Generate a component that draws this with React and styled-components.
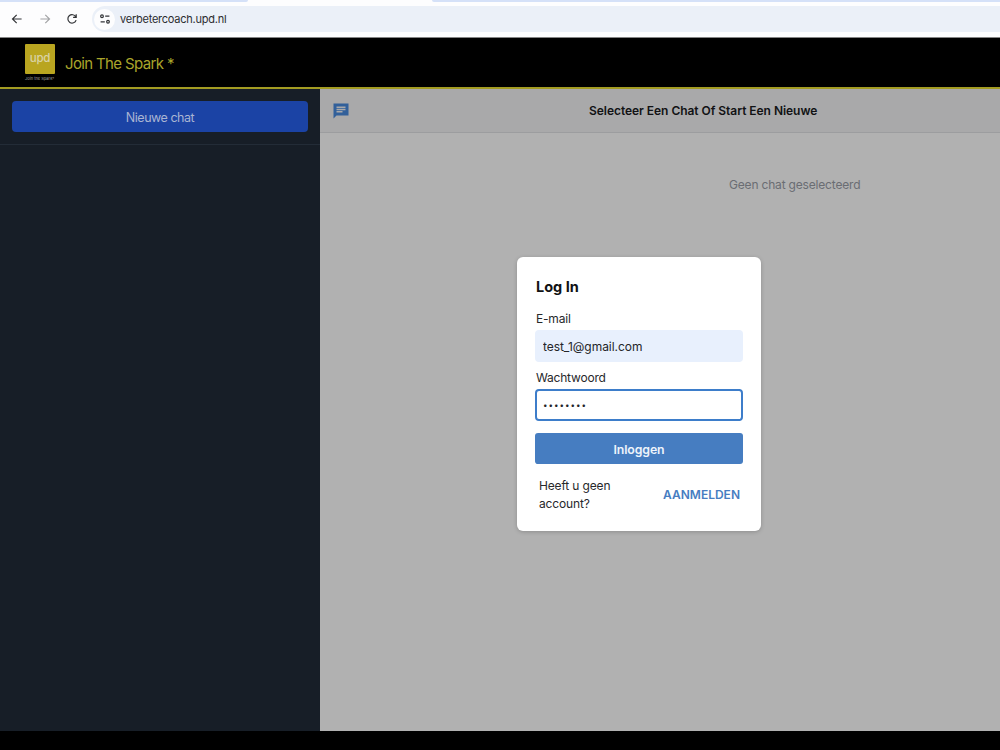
import React from 'react';
import styled, { createGlobalStyle } from 'styled-components';

const App = () => {
    return (
        <Window>
            <GlobalStyle />
            {/* Browser */}
            <TabStrip>
                <TabEdge width={248} side="left" />
                <TabEdge width={568} side="right" />
            </TabStrip>
            <Toolbar>
                <NavIcons>
                    <Icon viewBox="0 0 12 12"><path d="M10.6 6H1.6M5.7 1.8L1.5 6l4.2 4.2" /></Icon>
                    <Icon viewBox="0 0 12 12" faded><path d="M1.4 6h9M6.3 1.8L10.5 6l-4.2 4.2" /></Icon>
                    <Icon viewBox="0 0 12 12"><path d="M9.8 3.9A4.2 4.2 0 1 0 10.1 7.1M10.2 1.2v3.1H7.1" /></Icon>
                </NavIcons>
                <AddressBar>
                    <SiteInfo>
                        <Icon viewBox="0 0 12 12">
                            <circle cx="3" cy="3.2" r="1.35" />
                            <path d="M6.2 3.2h4.2M1.6 8.8h4.2" />
                            <circle cx="9" cy="8.8" r="1.35" />
                        </Icon>
                    </SiteInfo>
                    <Url>verbetercoach.upd.nl</Url>
                </AddressBar>
            </Toolbar>

            {/* Header */}
            <Header>
                <Logo>
                    <LogoBox>upd</LogoBox>
                    <LogoCaption>Join the Spark*</LogoCaption>
                </Logo>
                <Brand>Join The Spark *</Brand>
            </Header>

            <Content>
                <Sidebar>
                    <SidebarTop>
                        <NewChatButton>Nieuwe chat</NewChatButton>
                    </SidebarTop>
                </Sidebar>
                <Main>
                    <ChatHeader>
                        <ChatIcon viewBox="0 0 24 24">
                            <path d="M22 2H2v20l4-4h16V2zM6 9h12v2H6V9zm8 5H6v-2h8v2zm4-6H6V6h12v2z" />
                        </ChatIcon>
                        <ChatTitle>Selecteer Een Chat Of Start Een Nieuwe</ChatTitle>
                    </ChatHeader>
                    <EmptyText>Geen chat geselecteerd</EmptyText>
                </Main>
            </Content>
            <BottomBar />

            {/* Login */}
            <Modal>
                <ModalTitle>Log In</ModalTitle>
                <Label htmlFor="email">E-mail</Label>
                <Input id="email" type="text" defaultValue="test_1@gmail.com" filled />
                <Label htmlFor="password">Wachtwoord</Label>
                <Input id="password" type="text" defaultValue="••••••••" dots />
                <LoginButton>Inloggen</LoginButton>
                <SignUp>
                    <SignUpText>Heeft u geen account?</SignUpText>
                    <SignUpLink>AANMELDEN</SignUpLink>
                </SignUp>
            </Modal>
        </Window>
    )
}

export default App;


const GlobalStyle = createGlobalStyle`
    * {
        box-sizing: border-box;
    }

    body {
        margin: 0;
        overflow: hidden;
        font-family: Inter, 'Liberation Sans', sans-serif;
    }

    button, input {
        font-family: inherit;
    }
`;

const keep = (...names) => ({ shouldForwardProp: (prop) => !names.includes(prop) });

const Window = styled.div`
    position: relative;
    display: flex;
    flex-direction: column;
    width: 1000px;
    height: 750px;
    background: #000;
`;

// Browser
const TabStrip = styled.div`
    display: flex;
    justify-content: space-between;
    height: 2px;
    background: #fdfdfe;
`;

const TabEdge = styled.div.withConfig(keep('width', 'side'))`
    width: ${props => props.width}px;
    background: #d5e1f8;
    border-radius: ${props => props.side === 'left' ? '0 0 4px 0' : '0 0 0 4px'};
`;

const Toolbar = styled.div`
    display: flex;
    align-items: center;
    height: 36px;
    padding: 0 0 1px 11px;
    background: #fdfdfe;
    border-bottom: 1px solid #858585;
`;

const NavIcons = styled.div`
    display: flex;
    gap: 15.5px;
    width: 81px;
`;

const Icon = styled.svg.withConfig(keep('faded'))`
    display: block;
    width: 12px;
    height: 12px;
    flex: none;
    fill: none;
    stroke: ${props => props.faded ? '#a3a4a6' : '#333538'};
    stroke-width: 1.2;
`;

const AddressBar = styled.div`
    display: flex;
    align-items: center;
    flex: 1;
    height: 26px;
    padding-left: 2px;
    background: #ebf0f8;
    border-radius: 13px 0 0 13px;
`;

const SiteInfo = styled.div`
    display: flex;
    align-items: center;
    justify-content: center;
    width: 21px;
    height: 21px;
    border-radius: 50%;
    background: #fdfdfe;
`;

const Url = styled.span`
    margin: 0 0 0 5px;
    font-size: 11px;
    letter-spacing: -0.24px;
    color: #2b2d30;
`;

// Header
const Header = styled.div`
    display: flex;
    align-items: flex-start;
    height: 51px;
    padding: 6px 0 0 25px;
    background: #000;
    border-bottom: 2px solid #a39c22;
`;

const Logo = styled.div`
    width: 30px;
    margin-right: 10px;
`;

const LogoBox = styled.div`
    height: 30px;
    padding-top: 4px;
    border-radius: 1px;
    background: #b9a520;
    color: #d9d3a5;
    font-size: 11.5px;
    font-weight: 500;
    line-height: 20px;
    letter-spacing: -0.2px;
    text-align: center;
`;

const LogoCaption = styled.div`
    margin-top: 2px;
    font-size: 4px;
    line-height: 6px;
    white-space: nowrap;
    color: #a5a5a5;
`;

const Brand = styled.span`
    margin-top: 9px;
    font-size: 15px;
    font-weight: 400;
    line-height: 21px;
    letter-spacing: -0.64px;
    color: #aaa52b;
`;

// Content
const Content = styled.div`
    display: flex;
    height: 642px;
`;

const Sidebar = styled.div`
    width: 320px;
    background: #171e27;
`;

const SidebarTop = styled.div`
    height: 56px;
    padding: 12px 12px 0;
    border-bottom: 1px solid #232c37;
`;

const NewChatButton = styled.button`
    display: block;
    width: 296px;
    height: 31px;
    padding: 1px 0 0;
    border: 0;
    border-radius: 4px;
    background: #1b43a5;
    color: #a9b4d3;
    font-size: 12.5px;
    letter-spacing: -0.48px;
`;

const Main = styled.div`
    flex: 1;
    background: #b1b1b1;
`;

const ChatHeader = styled.div`
    display: flex;
    align-items: center;
    height: 44px;
    padding: 0 12px;
    background: #a9a9aa;
    border-bottom: 1px solid #9c9d9f;
`;

const ChatIcon = styled.svg`
    display: block;
    flex: none;
    width: 18px;
    height: 18px;
    fill: #32609a;
`;

const ChatTitle = styled.h2`
    margin: 0 0 0 239px;
    font-size: 12px;
    font-weight: 600;
    letter-spacing: -0.04px;
    color: #111214;
    white-space: nowrap;
`;

const EmptyText = styled.p`
    margin: 43px 0 0 409px;
    font-size: 12px;
    line-height: 18px;
    letter-spacing: -0.18px;
    color: #6a6d73;
`;

const BottomBar = styled.div`
    flex: 1;
    background: #000;
`;

// Login modal
const Modal = styled.div`
    position: absolute;
    top: 257px;
    left: 517px;
    width: 244px;
    height: 274px;
    padding: 18px;
    border-radius: 6px;
    background: #fff;
    box-shadow: 0 1px 4px rgba(0, 0, 0, 0.2);
    color: #27282b;
`;

const ModalTitle = styled.h3`
    margin: 0 0 12px 1px;
    font-size: 14.5px;
    font-weight: 700;
    line-height: 23px;
    color: #111214;
`;

const Label = styled.label`
    display: block;
    height: 20px;
    margin-left: 1px;
    font-size: 12px;
    line-height: 18px;
    letter-spacing: -0.2px;
`;

const Input = styled.input.withConfig(keep('filled', 'dots'))`
    display: block;
    width: 208px;
    height: 32px;
    margin-bottom: 7px;
    padding: 0 6px;
    border: 2px solid ${props => props.filled ? '#e8f0fd' : '#3d7dca'};
    border-radius: 4px;
    outline: 0;
    background: ${props => props.filled ? '#e8f0fd' : '#fff'};
    color: #242529;
    font-size: ${props => props.dots ? '8px' : '12px'};
    letter-spacing: ${props => props.dots ? '1px' : '-0.05px'};
`;

const LoginButton = styled.button`
    display: block;
    width: 208px;
    height: 31px;
    margin-top: 12px;
    padding: 1px 0 0;
    border: 0;
    border-radius: 3px;
    background: #467dc1;
    color: #eef4fb;
    font-size: 12.3px;
    font-weight: 600;
    letter-spacing: -0.1px;
`;

const SignUp = styled.div`
    display: flex;
    align-items: center;
    justify-content: space-between;
    padding: 13px 3px 0 4px;
`;

const SignUpText = styled.p`
    width: 85px;
    margin: 0;
    font-size: 12px;
    line-height: 18px;
    letter-spacing: -0.15px;
`;

const SignUpLink = styled.span`
    margin-bottom: 2px;
    font-size: 12px;
    font-weight: 600;
    color: #467dc1;
`;
